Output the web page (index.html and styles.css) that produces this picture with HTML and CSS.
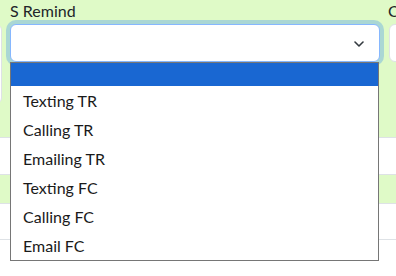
FILE: index.html
```html
<!DOCTYPE html>
<html lang="en">
<head>
  <meta charset="UTF-8" />
  <meta name="viewport" content="width=device-width, initial-scale=1.0" />
  <title>Reminders</title>
  <link rel="stylesheet" href="styles.css">
</head>
<body>
  <div class="table">
    <div class="tr tr-form">
      <div class="col col-notes">
        <div class="lbl">&nbsp;</div>
        <div class="box notes"></div>
      </div>

      <div class="col col-main">
        <label class="lbl">S Remind</label>
        <div class="select">
          <svg class="chev" width="10" height="6" viewBox="0 0 10 6">
            <path d="M1 1 L5 5 L9 1" fill="none" stroke="#343a40" stroke-width="1.6" stroke-linecap="round" stroke-linejoin="round"/>
          </svg>
        </div>

        <ul class="dropdown">
          <li class="opt opt-empty selected"></li>
          <li class="opt">Texting TR</li>
          <li class="opt">Calling TR</li>
          <li class="opt">Emailing TR</li>
          <li class="opt">Texting FC</li>
          <li class="opt">Calling FC</li>
          <li class="opt">Email FC</li>
        </ul>
      </div>

      <div class="col col-next">
        <label class="lbl">C</label>
        <div class="box input"></div>
      </div>
    </div>
    <div class="tr tr-white h36"></div>
    <div class="tr tr-green h28"></div>
    <div class="tr tr-white h35"></div>
  </div>
</body>
</html>
```

FILE: styles.css
```css
html, body {
  min-height: 276px;
}
body {
  margin: 0;
  font-family: Lato, 'Noto Sans', sans-serif;
  font-size: 16px;
  color: #212529;
  background: #fff;
}
.table {
  width: 396px;
  overflow: visible;
}
.tr {
  border-bottom: 1px solid #dee2e6;
}
.tr-form {
  background: #dffac7;
  height: 137px;
  display: flex;
  gap: 8px;
  box-sizing: border-box;
  height: 138px;
}
.tr-white { background: #fff; }
.tr-green { background: #dffac7; }
.h36 { height: 36px; }
.h28 { height: 28px; }
.h35 { height: 35px; }

.col {
  flex: none;
}
.col-notes {
  width: 100px;
  margin-left: -98px;
}
.col-main {
  width: 370px;
  position: relative;
  z-index: 2;
}
.col-next {
  width: 8px;
  overflow: hidden;
}
.lbl {
  display: block;
  line-height: 22px;
  margin-bottom: 2px;
  white-space: nowrap;
}
.box {
  background: #fff;
  border: 1px solid #dee2e6;
  border-radius: 6px;
  box-sizing: border-box;
}
.notes {
  margin-top: 2px;
  height: 80px;
}
.input {
  width: 60px;
  height: 38px;
  margin-left: 1px;
}
.select {
  height: 38px;
  box-sizing: border-box;
  background: #fff;
  border: 1px solid #86b7fe;
  border-radius: 6px;
  box-shadow: 0 0 0 4px rgba(13, 110, 253, .25);
  display: flex;
  align-items: center;
  justify-content: flex-end;
  padding-right: 15px;
}
.chev {
  display: block;
  margin-top: 1px;
}
.dropdown {
  position: absolute;
  left: 0;
  top: 62px;
  width: 369px;
  box-sizing: border-box;
  margin: 0;
  padding: 0;
  list-style: none;
  background: #fff;
  border: 1px solid #767676;
  color: #1a1a1a;
}
.opt {
  height: 29px;
  line-height: 29px;
  padding-left: 12px;
}
.opt-empty {
  height: 23px;
}
.selected {
  background: #1967d2;
}
```
